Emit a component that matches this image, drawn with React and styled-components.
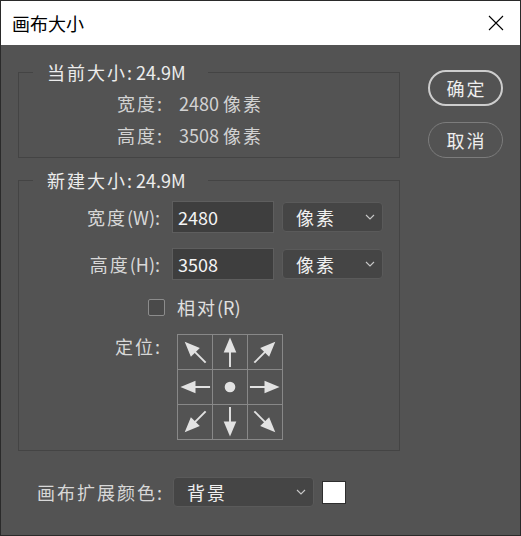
import React from "react";
import styled, { createGlobalStyle } from "styled-components";

const Global = createGlobalStyle`
  html, body { margin: 0; padding: 0; background: #535353; }
  * { box-sizing: border-box; }
  body { font-family: "Noto Sans CJK SC", "Microsoft YaHei", sans-serif; }
`;

const Window = styled.div`
  width: 521px;
  height: 536px;
  border: 1px solid #2a2a2a;
  display: flex;
  flex-direction: column;
  background: #535353;
  overflow: hidden;
`;

const TitleBar = styled.div`
  height: 44px;
  flex: none;
  background: #ffffff;
  display: flex;
  align-items: center;
  justify-content: space-between;
  padding: 0 15px 0 11px;
  color: #000;
  font-size: 18px;
`;

const CloseBtn = styled.div`
  width: 18px;
  height: 18px;
  display: flex;
  align-items: center;
  justify-content: center;
`;

const Han = styled.span`
  letter-spacing: 2px;
`;

const Body = styled.div`
  flex: 1;
  display: flex;
  flex-direction: column;
  padding: 15px 0 0 17px;
  color: #d8d8d8;
  font-size: 18px;
`;

const Main = styled.div`
  display: flex;
  align-items: flex-start;
`;

const LeftCol = styled.div`
  display: flex;
  flex-direction: column;
  gap: 10px;
  width: 382px;
`;

const Group = styled.fieldset`
  margin: 0;
  border: 1px solid #444444;
  padding: ${(p) => p.$pad};
  min-width: 0;
`;

const Legend = styled.legend`
  margin-left: 14px;
  padding: 0 22px 0 14px;
  color: #ececec;
  font-size: 18px;
  line-height: 24px;
`;

const InfoGrid = styled.div`
  display: grid;
  grid-template-columns: 62px auto;
  grid-auto-rows: 32px;
  align-items: center;
  padding-left: 98px;
  color: #d2d2d2;
`;

const FormGrid = styled.div`
  display: grid;
  grid-template-columns: 141px auto;
  column-gap: 12px;
  row-gap: 15px;
  align-items: center;
`;

const Label = styled.div`
  text-align: right;
  color: #d8d8d8;
  line-height: 24px;
  align-self: ${(p) => (p.$top ? "start" : "center")};
`;

const Controls = styled.div`
  display: flex;
  align-items: center;
  gap: 8px;
`;

const NumInput = styled.div`
  width: 102px;
  height: 32px;
  background: #3e3e3e;
  border: 1px solid #5e5e5e;
  color: #f4f4f4;
  display: flex;
  align-items: center;
  padding-left: 5px;
`;

const Select = styled.div`
  width: ${(p) => p.$w}px;
  height: 30px;
  background: #454545;
  border: 1px solid #5a5a5a;
  border-radius: 4px;
  display: flex;
  align-items: center;
  justify-content: space-between;
  padding: 0 7px 0 13px;
  color: #f0f0f0;
`;

const CheckRow = styled.div`
  grid-column: 1 / span 2;
  display: flex;
  align-items: center;
  gap: 12px;
  padding-left: 129px;
  line-height: 24px;
  color: #e0e0e0;
`;

const Box = styled.div`
  width: 17px;
  height: 17px;
  border: 1px solid #8c8c8c;
  border-radius: 2px;
  background: #4a4a4a;
`;

const Anchor = styled.div`
  display: grid;
  grid-template-columns: repeat(3, 35px);
  grid-template-rows: repeat(3, 35px);
  width: 106px;
  margin-left: 5px;
  border-top: 1px solid #888;
  border-left: 1px solid #888;
`;

const Cell = styled.div`
  border-right: 1px solid #888;
  border-bottom: 1px solid #888;
  display: flex;
  align-items: center;
  justify-content: center;
`;

const RightCol = styled.div`
  display: flex;
  flex-direction: column;
  gap: 16px;
  margin-left: 28px;
  margin-top: 10px;
`;

const Button = styled.div`
  width: 75px;
  height: 36px;
  border-radius: 18px;
  border: ${(p) => (p.$primary ? "2px solid #cdcdcd" : "1px solid #7c7c7c")};
  display: flex;
  align-items: center;
  justify-content: center;
  color: #eeeeee;
  font-size: 18px;
  padding-left: 2px;
`;

const BottomRow = styled.div`
  display: flex;
  align-items: center;
  margin-top: 26px;
  padding-left: 19px;
  gap: 8px;
`;

const BottomLabel = styled.div`
  color: #d8d8d8;
  width: 128px;
`;

const Swatch = styled.div`
  width: 24px;
  height: 23px;
  background: #ffffff;
  border: 1px solid #2e2e2e;
`;

const Chevron = () => (
  <svg width="10" height="6" viewBox="0 0 10 6">
    <polyline points="1,1 5,5 9,1" fill="none" stroke="#c8c8c8" strokeWidth="1.1" />
  </svg>
);

const Arrow = ({ deg }) => (
  <svg width="34" height="34" viewBox="0 0 35 35" style={{ transform: `rotate(${deg}deg)` }}>
    <polygon points="17.5,2.5 11,18 24,18" fill="#e2e2e2" />
    <line x1="17.5" y1="17" x2="17.5" y2="33" stroke="#e2e2e2" strokeWidth="2" />
  </svg>
);

const Dot = () => (
  <svg width="34" height="34" viewBox="0 0 35 35">
    <circle cx="17.5" cy="17.5" r="5.5" fill="#e2e2e2" />
  </svg>
);

const cells = [-45, 0, 45, -90, null, 90, -135, 180, 135];

export default function App() {
  return (
    <>
      <Global />
      <Window>
        <TitleBar>
          <span>画布大小</span>
          <CloseBtn>
            <svg width="16" height="16" viewBox="0 0 16 16">
              <path d="M1 1 L15 15 M15 1 L1 15" stroke="#000" strokeWidth="1.1" />
            </svg>
          </CloseBtn>
        </TitleBar>
        <Body>
          <Main>
            <LeftCol>
              <Group $pad="3px 0 6px">
                <Legend><Han>当前大小</Han>: 24.9M</Legend>
                <InfoGrid>
                  <span><Han>宽度</Han>:</span>
                  <span>2480 <Han>像素</Han></span>
                  <span><Han>高度</Han>:</span>
                  <span>3508 <Han>像素</Han></span>
                </InfoGrid>
              </Group>
              <Group $pad="9px 0 10px">
                <Legend><Han>新建大小</Han>: 24.9M</Legend>
                <FormGrid>
                  <Label><Han>宽度</Han>(W):</Label>
                  <Controls>
                    <NumInput>2480</NumInput>
                    <Select $w={101}>
                      <Han>像素</Han>
                      <Chevron />
                    </Select>
                  </Controls>
                  <Label><Han>高度</Han>(H):</Label>
                  <Controls>
                    <NumInput>3508</NumInput>
                    <Select $w={101}>
                      <Han>像素</Han>
                      <Chevron />
                    </Select>
                  </Controls>
                  <CheckRow>
                    <Box />
                    <span><Han>相对</Han>(R)</span>
                  </CheckRow>
                  <Label $top><Han>定位</Han>:</Label>
                  <Anchor>
                    {cells.map((d, i) => (
                      <Cell key={i}>{d === null ? <Dot /> : <Arrow deg={d} />}</Cell>
                    ))}
                  </Anchor>
                </FormGrid>
              </Group>
            </LeftCol>
            <RightCol>
              <Button $primary><Han>确定</Han></Button>
              <Button><Han>取消</Han></Button>
            </RightCol>
          </Main>
          <BottomRow>
            <BottomLabel><Han>画布扩展颜色</Han>:</BottomLabel>
            <Select $w={141}>
              <Han>背景</Han>
              <Chevron />
            </Select>
            <Swatch />
          </BottomRow>
        </Body>
      </Window>
    </>
  );
}
